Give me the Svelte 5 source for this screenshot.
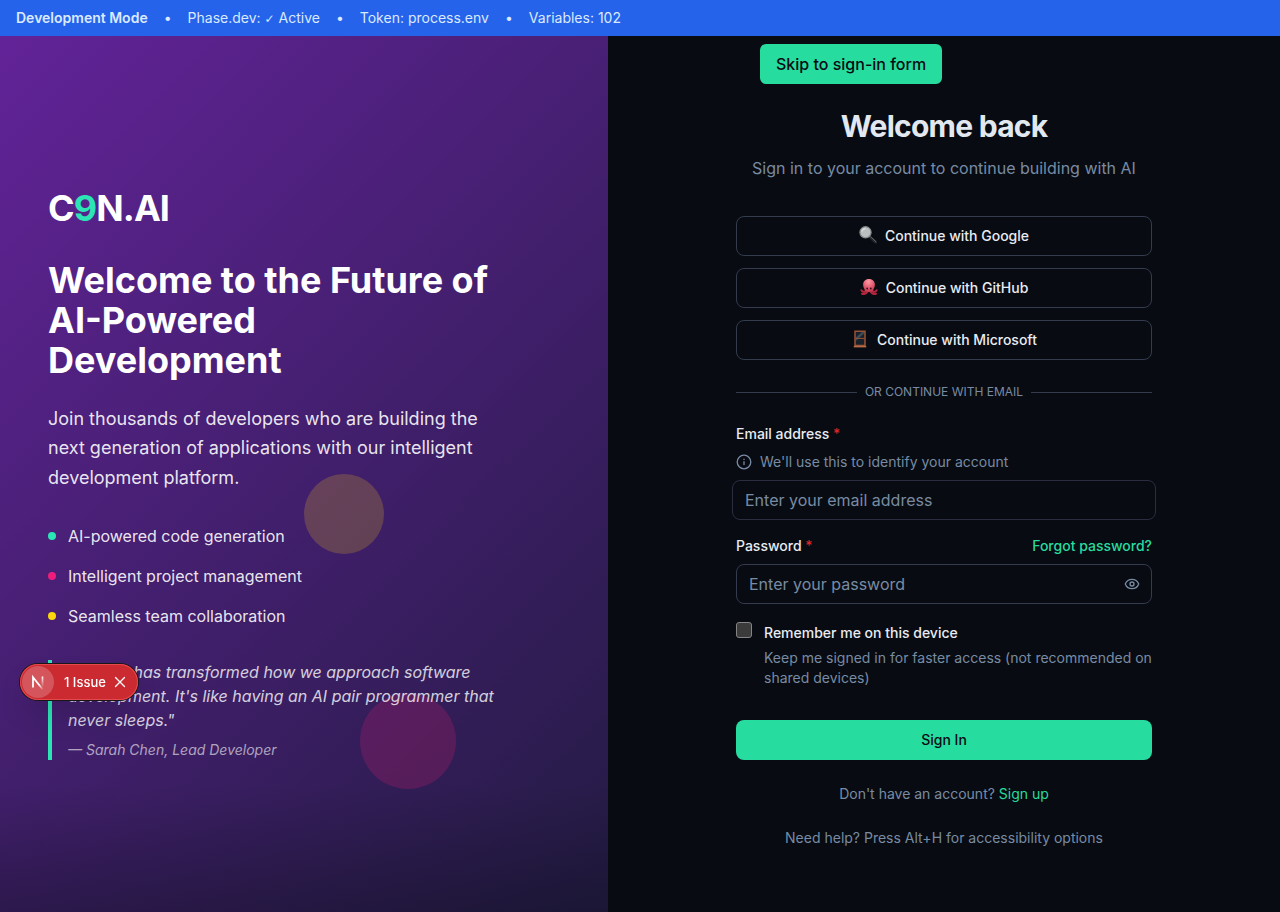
<script>
  const features = [
    { text: 'AI-powered code generation', tone: 'mint' },
    { text: 'Intelligent project management', tone: 'pink' },
    { text: 'Seamless team collaboration', tone: 'gold' }
  ];
  let email = $state('');
  let password = $state('');
  let remember = $state(false);
  let reveal = $state(false);
  let issueOpen = $state(true);
</script>

<div class="page">
  <div class="devbar">
    <strong>Development Mode</strong>
    <span>•</span>
    <span>Phase.dev: <span class="tick">✓</span> Active</span>
    <span>•</span>
    <span>Token: process.env</span>
    <span>•</span>
    <span>Variables: 102</span>
  </div>

  <div class="split">
    <section class="hero">
      <div class="shade"></div>
      <div class="orb gold-orb"></div>
      <div class="orb pink-orb"></div>
      <div class="pitch">
        <div class="logo">C<span>9</span>N.AI</div>
        <h1>Welcome to the Future of AI-Powered Development</h1>
        <p class="lead">Join thousands of developers who are building the next generation of applications with our intelligent development platform.</p>
        <ul>
          {#each features as f}
            <li><i class={f.tone}></i>{f.text}</li>
          {/each}
        </ul>
        <blockquote>
          <p>"C9N.AI has transformed how we approach software development. It's like having an AI pair programmer that never sleeps."</p>
          <cite>— Sarah Chen, Lead Developer</cite>
        </blockquote>
      </div>
    </section>

    <main>
      <a class="skip" href="#signin">Skip to sign-in form</a>
      <div class="panel">
        <header>
          <h2>Welcome back</h2>
          <p>Sign in to your account to continue building with AI</p>
        </header>

        <div class="providers">
          <button type="button">
            <svg width="18" height="18" viewBox="0 0 18 18" aria-hidden="true">
              <path d="M11 11l5.600 5.200" stroke="#26272a" stroke-width="3" stroke-linecap="round" />
              <path d="M11.600 10.700l5.200 4.900" stroke="#6a6d70" stroke-width="0.900" stroke-linecap="round" />
              <circle cx="6.500" cy="6.300" r="5.600" fill="#bcbfc0" stroke="#858b8d" stroke-width="1.200" />
              <path d="M2.800 5.600a4 4 0 0 1 3.700-3" fill="none" stroke="#dcdedf" stroke-width="1.100" />
            </svg>
            Continue with Google
          </button>
          <button type="button">
            <svg width="18" height="18" viewBox="0 0 18 18" aria-hidden="true">
              <defs>
                <radialGradient id="octopus" cx="0.45" cy="0.2" r="0.85"><stop stop-color="#ff9ba6" /><stop offset="0.55" stop-color="#e25a70" /><stop offset="1" stop-color="#b92e45" /></radialGradient>
              </defs>
              <path d="M6 12.500c-1.500 2.200-3.500 1.500-4.600-0.300M12 12.500c1.500 2.200 3.500 1.500 4.600-0.300M7.500 13c-1 3-3.500 3.200-5.500 2.700M10.500 13c1 3 3.500 3.200 5.500 2.700" fill="none" stroke="#b3263d" stroke-width="2" stroke-linecap="round" />
              <path d="M9 1c-3.800 0-5.900 2.600-5.900 5.700 0 2.600 1.500 3.700 1.900 6.300 1 1.500 7 1.500 8 0 .4-2.600 1.900-3.700 1.900-6.300C14.900 3.600 12.800 1 9 1z" fill="url(#octopus)" />
              <circle cx="7.200" cy="10.500" r="0.900" fill="#35121a" /><circle cx="10.800" cy="10.500" r="0.900" fill="#35121a" />
            </svg>
            Continue with GitHub
          </button>
          <button type="button">
            <svg width="18" height="18" viewBox="0 0 18 18" aria-hidden="true">
              <path d="M4 1.200h10v14.300h-10z" fill="#17212b" />
              <path d="M4.800 7.500l6-5.500h2.400v1.500l-8.400 7.500z" fill="#3d4a55" />
              <path d="M4 1.200h10v14.300h-10z" fill="none" stroke="#9a5334" stroke-width="1.500" />
              <path d="M4.500 8.400h9" stroke="#9a5334" stroke-width="1" />
              <path d="M2.800 16.600h12.400" stroke="#b96b46" stroke-width="1.600" />
            </svg>
            Continue with Microsoft
          </button>
        </div>

        <div class="divider"><span>Or continue with email</span></div>

        <form id="signin" onsubmit={(e) => e.preventDefault()}>
          <label class="name" for="email">Email address <b>*</b></label>
          <p class="hint" id="email-hint">
            <svg width="16" height="16" viewBox="0 0 16 16" fill="none" stroke="currentColor" stroke-width="1.300" aria-hidden="true">
              <circle cx="8" cy="8" r="6.800" /><path d="M8 7.300v3.700M8 4.800v1.300" />
            </svg>
            We'll use this to identify your account
          </p>
          <div class="field active">
            <input id="email" type="email" placeholder="Enter your email address" aria-describedby="email-hint" bind:value={email} />
          </div>

          <div class="labels">
            <label class="name" for="password">Password <b>*</b></label>
            <a href="#forgot">Forgot password?</a>
          </div>
          <div class="field">
            <input id="password" type={reveal ? 'text' : 'password'} placeholder="Enter your password" bind:value={password} />
            <button class="eye" type="button" aria-label="Show password" onclick={() => (reveal = !reveal)}>
              <svg width="16" height="16" viewBox="0 0 24 24" fill="none" stroke="currentColor" stroke-width="2" stroke-linecap="round" stroke-linejoin="round">
                <path d="M2.062 12.348a1 1 0 0 1 0-.696 10.750 10.750 0 0 1 19.876 0 1 1 0 0 1 0 .696 10.750 10.750 0 0 1-19.876 0" />
                <circle cx="12" cy="12" r="3" />
              </svg>
            </button>
          </div>

          <div class="remember">
            <input id="remember" type="checkbox" bind:checked={remember} />
            <div>
              <label for="remember">Remember me on this device</label>
              <p>Keep me signed in for faster access (not recommended on shared devices)</p>
            </div>
          </div>

          <button class="submit" type="submit">Sign In</button>
        </form>

        <p class="foot">Don't have an account? <a href="#signup">Sign up</a></p>
        <p class="foot">Need help? Press Alt+H for accessibility options</p>
      </div>
    </main>
  </div>

  {#if issueOpen}
    <div class="issue">
      <span class="mark">
        <svg width="20" height="20" viewBox="0 0 20 20" fill="none" aria-hidden="true">
          <defs>
            <linearGradient id="fadeA" x1="12" y1="12" x2="16" y2="17" gradientUnits="userSpaceOnUse"><stop stop-color="#fff" /><stop offset="1" stop-color="#fff" stop-opacity="0" /></linearGradient>
            <linearGradient id="fadeB" x1="14" y1="4" x2="14" y2="15" gradientUnits="userSpaceOnUse"><stop stop-color="#fff" /><stop offset="1" stop-color="#fff" stop-opacity="0" /></linearGradient>
          </defs>
          <path d="M5 15.500V5.200L14.800 17.500" stroke="url(#fadeA)" stroke-width="1.800" />
          <path d="M14.500 4.500v10.500" stroke="url(#fadeB)" stroke-width="1.700" />
        </svg>
      </span>
      <button class="count" type="button">1 Issue</button>
      <button class="close" type="button" aria-label="Dismiss" onclick={() => (issueOpen = false)}>
        <svg width="12" height="12" viewBox="0 0 12 12" stroke="#fff" stroke-width="1.300" stroke-linecap="round"><path d="M1.500 1.500l9 9M10.500 1.500l-9 9" /></svg>
      </button>
    </div>
  {/if}
</div>

<style>
  :global(body) { margin: 0; background: #080b12; }
  * { box-sizing: border-box; }
  .page {
    min-height: 100vh;
    display: flex;
    flex-direction: column;
    font-family: Inter, sans-serif;
    font-size: 16px;
    line-height: 24px;
    color: #e2e8f0;
    background: #080b12;
    -webkit-font-smoothing: antialiased;
  }
  p, h1, h2, ul, blockquote { margin: 0; padding: 0; }
  button { font: inherit; cursor: pointer; }
  a { color: #27dc9f; text-decoration: none; }

  .devbar {
    display: flex;
    gap: 16px;
    padding: 8px 16px;
    background: #2563eb;
    color: #dbeafe;
    font-size: 14px;
    line-height: 20px;
  }
  .devbar strong { font-weight: 600; }
  .tick { font-family: "DejaVu Sans", sans-serif; font-size: 12px; line-height: 16px; }

  .split { flex: 1; display: grid; grid-template-columns: 19fr 21fr; }

  .hero {
    position: relative;
    display: flex;
    align-items: center;
    padding: 48px;
    overflow: hidden;
    background: linear-gradient(135deg, #622398 0%, #231b43 100%);
  }
  .shade {
    position: absolute;
    inset: auto 0 0;
    height: 128px;
    background: linear-gradient(to top, rgba(8, 11, 18, 0.300), transparent);
  }
  .orb { position: absolute; border-radius: 50%; }
  .gold-orb { left: 50%; top: 50%; width: 80px; height: 80px; background: rgba(250, 204, 21, 0.200); }
  .pink-orb { right: 25%; top: 75%; width: 96px; height: 96px; background: rgba(219, 30, 110, 0.220); }
  .pitch { position: relative; max-width: 448px; }
  .logo { font-size: 36px; line-height: 40px; font-weight: 700; letter-spacing: -0.025em; color: #fff; margin-bottom: 32px; }
  .logo span { color: #2ce5b5; }
  h1 { font-size: 36px; line-height: 40px; font-weight: 700; color: #fff; margin-bottom: 24px; }
  .lead { font-size: 18px; line-height: 1.625; color: rgba(255, 255, 255, 0.900); margin-bottom: 32px; }
  ul { list-style: none; display: grid; gap: 16px; margin-bottom: 32px; color: rgba(255, 255, 255, 0.900); }
  li { display: flex; align-items: center; gap: 12px; }
  li i { width: 8px; height: 8px; border-radius: 50%; }
  .mint { background: #2ce5b5; }
  .pink { background: #ec1e79; }
  .gold { background: #fcd50b; }
  blockquote { border-left: 4px solid #2ce5b5; padding-left: 16px; font-style: italic; color: rgba(255, 255, 255, 0.800); }
  cite { display: block; margin-top: 8px; font-size: 14px; line-height: 20px; color: rgba(255, 255, 255, 0.600); }

  main { position: relative; display: flex; align-items: center; justify-content: center; padding: 40px 32px 32px; }
  .skip {
    position: absolute;
    top: 8px;
    left: 152px;
    padding: 8px 16px;
    border-radius: 6px;
    background: #27dc9f;
    color: #080b12;
    font-weight: 500;
  }
  .panel { width: 100%; max-width: 416px; }
  header { text-align: center; margin-bottom: 36px; }
  h2 { font-size: 30px; line-height: 36px; font-weight: 700; letter-spacing: -0.025em; margin-bottom: 12px; }
  header p { color: #788ba3; }

  .providers { display: grid; gap: 12px; }
  .providers button {
    height: 40px;
    display: flex;
    align-items: center;
    justify-content: center;
    gap: 8px;
    border: 1px solid #333b4d;
    border-radius: 8px;
    background: transparent;
    color: #e8ecf2;
    font-size: 14px;
    font-weight: 500;
  }
  .providers svg { margin-bottom: 2px; }
  .divider {
    display: flex;
    align-items: center;
    gap: 8px;
    margin: 24px 0;
    font-size: 12px;
    line-height: 16px;
    color: #788ba3;
    text-transform: uppercase;
  }
  .divider::before, .divider::after { content: ''; flex: 1; border-top: 1px solid #333b4d; }

  .name, .labels a, .remember label { font-size: 14px; line-height: 20px; font-weight: 500; }
  .name { display: block; color: #e8ecf2; }
  .name b { color: #dc2626; font-weight: 500; }
  .hint { display: flex; align-items: center; gap: 8px; margin: 8px 0; font-size: 14px; line-height: 20px; color: #788ba3; }
  .field { position: relative; }
  .field input {
    display: block;
    width: 100%;
    height: 40px;
    padding: 0 12px;
    border: 1px solid #333b4d;
    border-radius: 8px;
    outline: none;
    background: transparent;
    color: #e2e8f0;
    font: inherit;
  }
  .field input::placeholder { color: #788ba3; opacity: 1; }
  .active { margin: 0 -4px; }
  .active input { border-color: #2a2d40; }
  .eye {
    position: absolute;
    top: 12px;
    right: 12px;
    display: flex;
    padding: 0;
    border: 0;
    background: none;
    color: #788ba3;
  }
  .labels { display: flex; justify-content: space-between; margin: 16px 0 8px; }
  .remember { display: flex; gap: 12px; margin: 16px 0 32px; }
  .remember input {
    appearance: none;
    flex: none;
    width: 16px;
    height: 16px;
    margin: 2px 0 0;
    border: 1px solid #858585;
    border-radius: 3px;
    background: #3b3b3b;
  }
  .remember input:checked { background: #27dc9f; }
  .remember label { display: block; margin: 3px 0 5px; color: #e8ecf2; }
  .remember p { font-size: 14px; line-height: 20px; color: #788ba3; }
  .submit {
    display: block;
    width: 100%;
    height: 40px;
    border: 0;
    border-radius: 8px;
    background: #27dc9f;
    color: #080b12;
    font-size: 14px;
    font-weight: 500;
  }
  .foot { margin-top: 24px; text-align: center; font-size: 14px; line-height: 20px; color: #788ba3; }

  .issue {
    position: fixed;
    left: 20px;
    bottom: 212px;
    display: flex;
    align-items: center;
    height: 36px;
    padding: 0 12px 0 2px;
    border-radius: 18px;
    background: #ca2a30;
    box-shadow: 0 0 0 1px #171717, inset 0 0 0 1px #e5484d, 0 16px 32px -8px rgba(0, 0, 0, 0.240);
    font-size: 13px;
  }
  .issue button { display: flex; padding: 0; border: 0; background: none; color: #fff; }
  .mark { display: flex; width: 32px; height: 32px; align-items: center; justify-content: center; border-radius: 50%; background: #d4565c; }
  .issue .count { margin: 0 8px 0 10px; font-weight: 500; }
</style>
